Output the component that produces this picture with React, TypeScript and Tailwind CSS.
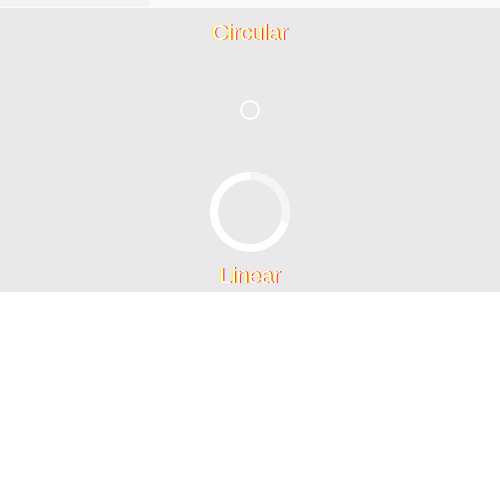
import React from "react";

const label =
  "text-[22px] leading-[26px] text-white [font-family:'Liberation_Sans',Arial,sans-serif] [text-shadow:1px_0_0_#ff0000,-1px_0_0_#ffff00]";

export default function App() {
  return (
    <div className="h-[500px] w-[500px] bg-white">
      <div className="h-[8px] w-full bg-[#fafafa]">
        <div className="h-[7px] w-[150px] rounded-r-full bg-[#f3f3f3]" />
      </div>

      <div className="flex h-[284px] flex-col items-center bg-[#e9e9e9] pt-[12px]">
        <div className={label}>Circular</div>

        <svg className="mt-[53px]" width="22" height="22" viewBox="0 0 22 22">
          <circle cx="11" cy="11" r="9" fill="none" stroke="#ffffff" strokeWidth="2" />
        </svg>

        <svg className="mt-[50px]" width="82" height="82" viewBox="0 0 82 82">
          <circle cx="41" cy="41" r="36" fill="none" stroke="#ffffff" strokeWidth="8" />
          <path
            d="M41 5 A36 36 0 0 1 75.5 51"
            fill="none"
            stroke="#f5f5f5"
            strokeWidth="8"
          />
        </svg>

        <div className={`${label} mt-[10px]`}>Linear</div>
      </div>
    </div>
  );
}
